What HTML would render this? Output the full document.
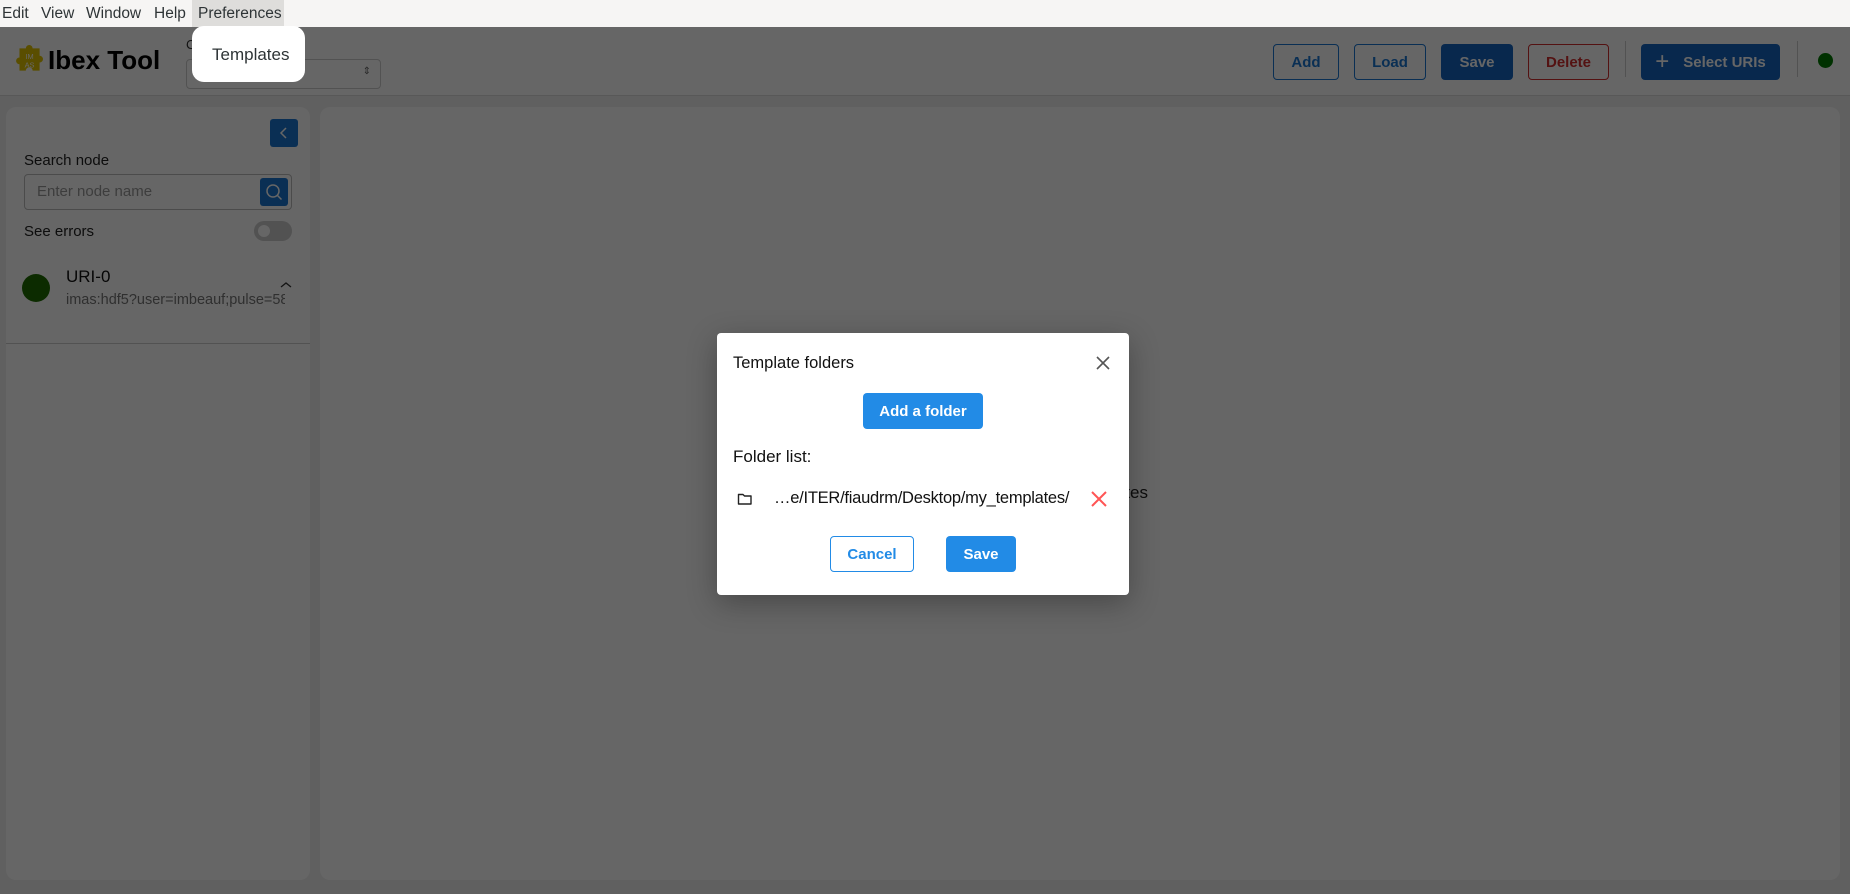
<!DOCTYPE html>
<html><head><meta charset="utf-8">
<style>
*{box-sizing:border-box;margin:0;padding:0}
html,body{width:1850px;height:894px;overflow:hidden;font-family:"Liberation Sans",sans-serif;background:#f0f0f0;position:relative}
.abs{position:absolute}
.menubar{left:0;top:0;width:1850px;height:27px;background:#f6f5f4;z-index:20;font-family:"Liberation Sans",sans-serif;font-size:15.5px;color:#2e3436}
.menubar span{position:absolute;top:5px}
.header{left:0;top:27px;width:1850px;height:69px;background:#fff;border-bottom:1px solid #ddd}
.btn{position:absolute;top:44px;height:36px;border-radius:4px;font-weight:bold;font-size:15px;display:flex;align-items:center;justify-content:center}
.ob{border:1px solid #1976d2;color:#1976d2;background:#fff}
.fb{background:#1565c0;color:#fff}
.panel{background:#fff;border-radius:10px}
.overlay{left:0;top:27px;width:1850px;height:867px;background:rgba(0,0,0,0.6);z-index:10}
</style></head><body>
<div class="abs menubar">
<span style="left:2px">Edit</span><span style="left:41px">View</span><span style="left:86px">Window</span><span style="left:154px">Help</span>
<div class="abs" style="left:192px;top:0;width:92px;height:27px;background:#dedddb"></div>
<span style="left:198px">Preferences</span>
</div>

<div class="abs header">
<svg class="abs" style="left:11px;top:15px" width="36" height="36" viewBox="0 0 34 34"><path d="M8 6h6a3.2 3.2 0 1 1 6.4 0H27v7a3.2 3.2 0 1 1 0 6.4V27h-6.6a3.2 3.2 0 1 0-6.4 0H8v-6a3.2 3.2 0 1 1 0-6.4z" fill="#e0c300"/><text x="17.5" y="16" font-size="7" text-anchor="middle" fill="#fff" font-family="Liberation Sans">IM</text><text x="17.5" y="24" font-size="7" text-anchor="middle" fill="#fff" font-family="Liberation Sans">AS</text></svg>
<div class="abs" style="left:48px;top:18px;font-size:26px;font-weight:bold;color:#000">Ibex Tool</div>
<div class="abs" style="left:186px;top:10px;font-size:13px;color:#333">C</div>
<div class="abs" style="left:186px;top:32px;width:195px;height:30px;border:1px solid #ccc;border-radius:4px"><span class="abs" style="right:9px;top:6px;font-size:10px;color:#666">⇕</span></div>
<div class="btn ob" style="left:1273px;top:17px;width:66px">Add</div>
<div class="btn ob" style="left:1354px;top:17px;width:72px">Load</div>
<div class="btn fb" style="left:1441px;top:17px;width:72px">Save</div>
<div class="btn" style="left:1528px;top:17px;width:81px;border:1px solid #d32f2f;color:#d32f2f">Delete</div>
<div class="abs" style="left:1625px;top:14px;width:1px;height:36px;background:#ccc"></div>
<div class="btn fb" style="left:1641px;top:17px;width:139px"><span style="font-size:24px;font-weight:normal;margin-right:14px">+</span>Select URIs</div>
<div class="abs" style="top:14px;width:1px;height:36px;background:#ccc;left:1797px"></div>
<div class="abs" style="left:1818px;top:26px;width:15px;height:15px;border-radius:50%;background:#007a00"></div>
</div>

<div class="abs panel" style="left:6px;top:107px;width:304px;height:773px">
<div class="abs" style="left:264px;top:12px;width:28px;height:28px;background:#1976d2;border-radius:3px"><svg width="28" height="28"><path d="M16 9l-5 5 5 5" stroke="#fff" stroke-width="1.5" fill="none"/></svg></div>
<div class="abs" style="left:18px;top:45px;font-size:15px;color:#222">Search node</div>
<div class="abs" style="left:18px;top:67px;width:268px;height:36px;border:1px solid #bbb;border-radius:4px"><span class="abs" style="left:12px;top:8px;font-size:15px;color:#999">Enter node name</span>
<div class="abs" style="right:3px;top:3px;width:28px;height:28px;background:#1976d2;border-radius:3px"><svg width="28" height="28"><circle cx="13" cy="13" r="6" stroke="#fff" stroke-width="1.5" fill="none"/><path d="M17.5 17.5l4 4" stroke="#fff" stroke-width="1.5"/></svg></div></div>
<div class="abs" style="left:18px;top:116px;font-size:15px;color:#222">See errors</div>
<div class="abs" style="left:248px;top:114px;width:38px;height:20px;border-radius:10px;background:#ccc"><div class="abs" style="left:4px;top:4px;width:12px;height:12px;border-radius:50%;background:#fff"></div></div>
<div class="abs" style="left:16px;top:167px;width:28px;height:28px;border-radius:50%;background:#1e6b00"></div>
<div class="abs" style="left:60px;top:160px;font-size:17px;color:#111">URI-0</div>
<div class="abs" style="left:60px;top:185px;width:219px;overflow:hidden;white-space:nowrap;font-size:14.5px;color:#777">imas:hdf5?user=imbeauf;pulse=58</div>
<svg class="abs" style="left:274px;top:174px" width="12" height="8"><path d="M1 6l5-4 5 4" stroke="#333" stroke-width="1.3" fill="none"/></svg>
<div class="abs" style="left:0;top:236px;width:304px;height:1px;background:#ccc"></div>
</div>

<div class="abs panel" style="left:320px;top:107px;width:1520px;height:773px">
<div class="abs" style="right:692px;top:376px;font-size:17px;color:#222;white-space:nowrap">No available templates</div>
</div>

<div class="abs overlay"></div>

<div class="abs" style="left:192px;top:26px;width:113px;height:56px;background:#fff;border-radius:12px;z-index:20;font-family:'Liberation Sans',sans-serif;font-size:17px;color:#2e3436;padding:19px 0 0 20px">Templates</div>

<div class="abs" style="left:717px;top:333px;width:412px;height:262px;background:#fff;border-radius:4px;z-index:20;box-shadow:0 8px 30px rgba(0,0,0,.3)">
<div class="abs" style="left:16px;top:21px;font-size:16.5px;color:#111">Template folders</div>
<svg class="abs" style="left:379px;top:23px" width="14" height="14"><path d="M1 1l12 12M13 1L1 13" stroke="#555" stroke-width="1.6"/></svg>
<div class="btn" style="left:146px;top:60px;width:120px;background:#228be6;color:#fff">Add a folder</div>
<div class="abs" style="left:16px;top:114px;font-size:17px;color:#111">Folder list:</div>
<svg class="abs" style="left:20px;top:159px" width="16" height="14"><path d="M1.5 2.5h4.5l1.5 1.5h6.5v8h-12.5z" fill="none" stroke="#222" stroke-width="1.4" stroke-linejoin="round"/></svg>
<div class="abs" style="left:57px;top:156px;font-size:16.5px;color:#111;letter-spacing:-0.25px">…e/ITER/fiaudrm/Desktop/my_templates/</div>
<svg class="abs" style="left:374px;top:158px" width="16" height="16"><path d="M1 1l14 14M15 1L1 15" stroke="#ff5555" stroke-width="2"/></svg>
<div class="btn" style="left:113px;top:203px;width:84px;border:1px solid #228be6;color:#228be6">Cancel</div>
<div class="btn" style="left:229px;top:203px;width:70px;background:#228be6;color:#fff">Save</div>
</div>
</body></html>
